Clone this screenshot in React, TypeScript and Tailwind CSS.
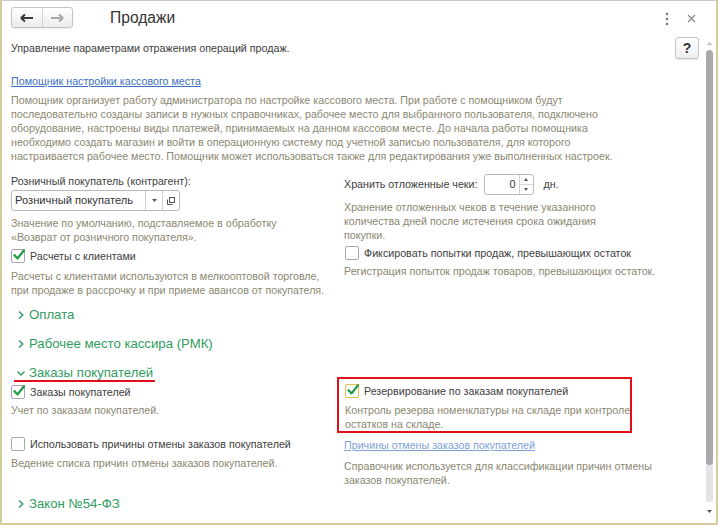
import React from "react";

const font = { fontFamily: '"Liberation Sans", Arial, sans-serif' };

function Check({ checked, focus }: { checked?: boolean; focus?: boolean }) {
  return (
    <span
      className={
        "relative inline-block w-[14px] h-[14px] shrink-0 rounded-[2px] bg-white border " +
        (focus ? "border-[#e2c04a]" : "border-[#a8a8a8]")
      }
    >
      {checked && (
        <svg viewBox="0 0 14 14" className="absolute left-[0px] top-[-2px] w-[14px] h-[14px]">
          <path d="M2.5 7.2 L5.6 10.4 L12 2.2" fill="none" stroke="#1e9a46" strokeWidth="2.2" strokeLinecap="round" strokeLinejoin="round" />
        </svg>
      )}
    </span>
  );
}

function CheckRow({ label, checked, focus }: { label: string; checked?: boolean; focus?: boolean }) {
  return (
    <div className="flex items-center gap-[5px] h-[14px] text-[10.7px] text-[#404040]">
      <Check checked={checked} focus={focus} />
      <span className="whitespace-nowrap">{label}</span>
    </div>
  );
}

function Note({ lines }: { lines: string[] }) {
  return (
    <div className="text-[10.7px] leading-[14px] text-[#8b8772]">
      {lines.map((l) => (
        <div key={l} className="whitespace-nowrap">
          {l}
        </div>
      ))}
    </div>
  );
}

function Section({ title, open }: { title: string; open?: boolean }) {
  return (
    <div className="flex items-center h-[20px] text-[13.2px] text-[#2f9c5e]">
      <span className="w-[16px] flex justify-start pl-[3px]">
        {open ? (
          <svg width="10" height="10" viewBox="0 0 10 10">
            <path d="M1.5 3.5 L5 7 L8.5 3.5" fill="none" stroke="#2f9c5e" strokeWidth="1.4" />
          </svg>
        ) : (
          <svg width="10" height="10" viewBox="0 0 10 10">
            <path d="M3 1.5 L6.8 5 L3 8.5" fill="none" stroke="#2f9c5e" strokeWidth="1.4" />
          </svg>
        )}
      </span>
      <span className="whitespace-nowrap">{title}</span>
    </div>
  );
}

export default function App(): React.ReactNode {
  return (
    <div style={font} className="w-[718px] h-[525px] bg-white border-x-2 border-b-2 border-t border-x-[#d3cd9c] border-b-[#d3cd9c] border-t-[#c8c8c8] flex flex-col overflow-hidden">
      <header className="h-[35px] flex items-center pl-[9px] pr-[20px] shrink-0">
        <div className="flex h-[21px] w-[62px] mt-[-2px] border border-[#c4c4c4] rounded-[3px] bg-gradient-to-b from-white to-[#ececec] shadow-[0_1px_1px_rgba(0,0,0,0.08)]">
          <div className="flex-1 flex items-center justify-center border-r border-[#d4d4d4]">
            <svg width="14" height="10" viewBox="0 0 14 10">
              <path d="M1 5 H13 M1 5 L5 1.5 M1 5 L5 8.5" fill="none" stroke="#3a3a3a" strokeWidth="2" />
            </svg>
          </div>
          <div className="flex-1 flex items-center justify-center">
            <svg width="14" height="10" viewBox="0 0 14 10">
              <path d="M1 5 H13 M13 5 L9 1.5 M13 5 L9 8.5" fill="none" stroke="#a8a8a8" strokeWidth="2" />
            </svg>
          </div>
        </div>
        <div className="ml-[37px] mt-[-1px] text-[15.6px] text-[#333]">Продажи</div>
        <div className="ml-auto flex items-center gap-[18px] text-[#888]">
          <svg width="4" height="14" viewBox="0 0 4 14">
            <circle cx="2" cy="2" r="1.3" fill="#777" />
            <circle cx="2" cy="7" r="1.3" fill="#777" />
            <circle cx="2" cy="12" r="1.3" fill="#777" />
          </svg>
          <svg width="9" height="9" viewBox="0 0 9 9">
            <path d="M1 1 L8 8 M8 1 L1 8" stroke="#888" strokeWidth="1.2" />
          </svg>
        </div>
      </header>

      <div className="flex-1 flex min-h-0">
        <main className="flex-1 pl-[9px] pr-[3px] min-w-0">
          <div className="flex items-center justify-between h-[22px] mt-[1px]">
            <span className="text-[10.7px] text-[#404040]">Управление параметрами отражения операций продаж.</span>
            <div className="w-[24px] h-[22px] border border-[#c4c4c4] rounded-[3px] bg-gradient-to-b from-white to-[#efefef] flex items-center justify-center text-[14px] font-bold text-[#333] shadow-[0_1px_1px_rgba(0,0,0,0.1)]">
              ?
            </div>
          </div>

          <div className="mt-[15px] text-[10.7px] leading-[14px] text-[#3d6fc6] underline">Помощник настройки кассового места</div>
          <div className="mt-[5px]">
            <Note
              lines={[
                "Помощник организует работу администратора по настройке кассового места. При работе с помощником будут",
                "последовательно созданы записи в нужных справочниках, рабочее место для выбранного пользователя, подключено",
                "оборудование, настроены виды платежей, принимаемых на данном кассовом месте. До начала работы помощника",
                "необходимо создать магазин и войти в операционную систему под учетной записью пользователя, для которого",
                "настраивается рабочее место. Помощник может использоваться также для редактирования уже выполненных настроек.",
              ]}
            />
          </div>

          <div className="grid grid-cols-[333px_1fr] mt-[11px]">
            <div>
              <div className="text-[10.7px] leading-[14px] text-[#404040]">Розничный покупатель (контрагент):</div>
              <div className="mt-[2px] flex h-[21px] w-[169px] border border-[#b9b9b9] rounded-[3px] text-[11.2px] text-[#333]">
                <div className="flex-1 flex items-center pl-[3px] whitespace-nowrap">Розничный покупатель</div>
                <div className="w-[17px] border-l border-[#d0d0d0] flex items-center justify-center">
                  <svg width="5" height="3" viewBox="0 0 5 3">
                    <path d="M0 0 H5 L2.5 3 Z" fill="#555" />
                  </svg>
                </div>
                <div className="w-[17px] border-l border-[#d0d0d0] flex items-center justify-center">
                  <svg width="10" height="10" viewBox="0 0 10 10">
                    <rect x="3.5" y="1.5" width="5" height="5" fill="none" stroke="#555" />
                    <path d="M1.5 3.5 V8.5 H6.5" fill="none" stroke="#555" />
                  </svg>
                </div>
              </div>
              <div className="mt-[5px]">
                <Note lines={["Значение по умолчанию, подставляемое в обработку", "«Возврат от розничного покупателя»."]} />
              </div>
              <div className="mt-[5px]">
                <CheckRow label="Расчеты с клиентами" checked />
              </div>
              <div className="mt-[6px]">
                <Note
                  lines={[
                    "Расчеты с клиентами используются в мелкооптовой торговле,",
                    "при продаже в рассрочку и при приеме авансов от покупателя.",
                  ]}
                />
              </div>
            </div>

            <div>
              <div className="flex items-center h-[21px] text-[10.7px] text-[#404040]">
                <span className="whitespace-nowrap">Хранить отложенные чеки:</span>
                <div className="ml-[6px] flex h-[21px] w-[50px] border border-[#b9b9b9] rounded-[3px] text-[11px] text-[#333]">
                  <div className="flex-1 flex items-center justify-end pr-[3px]">0</div>
                  <div className="w-[14px] border-l border-[#d0d0d0] flex flex-col">
                    <div className="flex-1 flex items-center justify-center border-b border-[#d8d8d8]">
                      <svg width="4" height="3" viewBox="0 0 4 3"><path d="M0 3 L2 0 L4 3 Z" fill="#555" /></svg>
                    </div>
                    <div className="flex-1 flex items-center justify-center">
                      <svg width="4" height="3" viewBox="0 0 4 3"><path d="M0 0 L2 3 L4 0 Z" fill="#555" /></svg>
                    </div>
                  </div>
                </div>
                <span className="ml-[10px]">дн.</span>
              </div>
              <div className="mt-[5px]">
                <Note
                  lines={[
                    "Хранение отложенных чеков в течение указанного",
                    "количества дней после истечения срока ожидания",
                    "покупки.",
                  ]}
                />
              </div>
              <div className="mt-[4px] pl-[1px]">
                <CheckRow label="Фиксировать попытки продаж, превышающих остаток" />
              </div>
              <div className="mt-[4px]">
                <Note lines={["Регистрация попыток продаж товаров, превышающих остаток."]} />
              </div>
            </div>
          </div>

          <div className="mt-[8px] flex flex-col gap-[9px] pl-[2px]">
            <Section title="Оплата" />
            <Section title="Рабочее место кассира (РМК)" />
            <div className="relative w-fit">
              <Section title="Заказы покупателей" open />
              <div className="absolute left-[1px] right-[-2px] bottom-[1px] h-[2px] bg-[#e3101b]" />
            </div>
          </div>

          <div className="grid grid-cols-[333px_1fr]">
            <div className="pt-[2px]">
              <CheckRow label="Заказы покупателей" checked />
              <div className="mt-[4px]">
                <Note lines={["Учет по заказам покупателей."]} />
              </div>
              <div className="mt-[20px]">
                <CheckRow label="Использовать причины отмены заказов покупателей" />
              </div>
              <div className="mt-[5px]">
                <Note lines={["Ведение списка причин отмены заказов покупателей."]} />
              </div>
            </div>
            <div>
              <div className="ml-[-7px] mt-[-6px] w-[295px] border-2 border-[#e3101b] pl-[6px] pt-[5px]">
                <CheckRow label="Резервирование по заказам покупателей" checked focus />
                <div className="mt-[5px]">
                  <Note lines={["Контроль резерва номенклатуры на складе при контроле", "остатков на складе."]} />
                </div>
              </div>
              <div className="mt-[5px] text-[10.7px] leading-[14px] text-[#7e9fd8] underline whitespace-nowrap">
                Причины отмены заказов покупателей
              </div>
              <div className="mt-[7px]">
                <Note lines={["Справочник используется для классификации причин отмены", "заказов покупателей."]} />
              </div>
            </div>
          </div>

          <div className="mt-[7px] pl-[2px]">
            <Section title="Закон №54-ФЗ" />
          </div>
        </main>

        <div className="w-[14px] shrink-0 flex flex-col items-center pt-[6px] pb-[10px]">
          <svg width="5" height="3" viewBox="0 0 5 3"><path d="M0 3 L2.5 0 L5 3 Z" fill="#bbb" /></svg>
          <div className="mt-[5px] w-[7px] flex-1 flex flex-col rounded-[3px] overflow-hidden">
            <div className="h-[415px] bg-[#a9a9a9] rounded-[3px]" />
            <div className="flex-1 bg-[#e3e3e3]" />
          </div>
          <div className="mt-[8px]">
            <svg width="5" height="3" viewBox="0 0 5 3"><path d="M0 0 L2.5 3 L5 0 Z" fill="#555" /></svg>
          </div>
        </div>
      </div>
    </div>
  );
}
